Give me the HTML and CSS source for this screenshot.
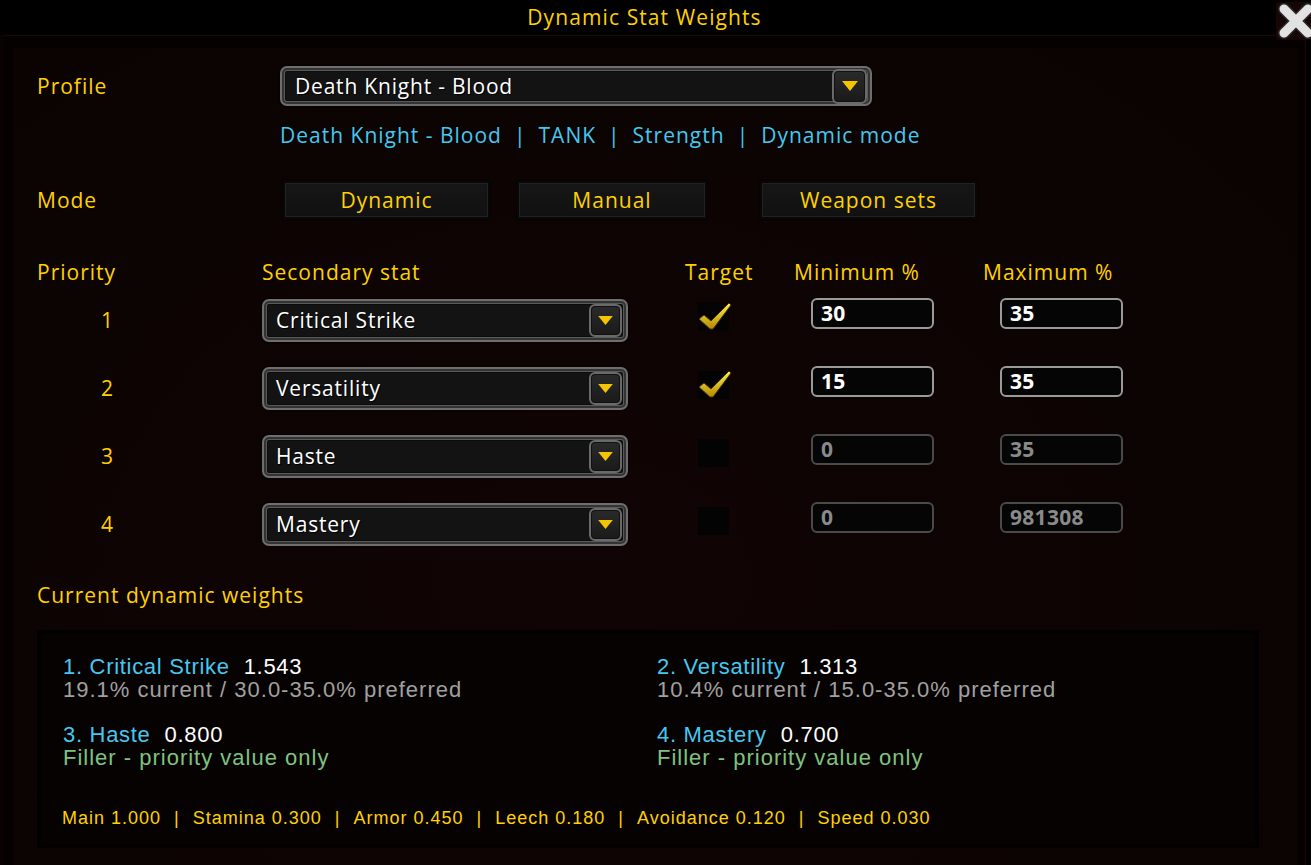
FILE: index.html
```html
<!DOCTYPE html>
<html lang="en">
<head>
<meta charset="utf-8">
<title>Dynamic Stat Weights</title>
<link rel="stylesheet" href="styles.css">
</head>
<body>
<div class="window">
  <header class="titlebar">
    <h1 class="title">Dynamic Stat Weights</h1>
    <button class="close" aria-label="Close">
      <svg viewBox="0 0 40 36" width="40" height="36">
        <path d="M8 6 L32 30 M32 6 L8 30" stroke="#2a2a2a" stroke-width="12" stroke-linecap="round"/>
        <path d="M8 6 L32 30 M32 6 L8 30" stroke="#e2e2e2" stroke-width="9" stroke-linecap="round"/>
      </svg>
    </button>
  </header>
  <div class="frame">
    <main class="panel">
      <section class="field-row profile-row">
        <span class="label">Profile</span>
        <div class="dropdown dropdown-lg">
          <span class="dd-text">Death Knight - Blood</span>
          <span class="dd-btn"><svg viewBox="0 0 18 12" width="18" height="12"><path d="M1 1 H17 L9 11 Z" fill="#f5c400"/></svg></span>
        </div>
      </section>
      <p class="info">Death Knight - Blood<span class="sep">|</span>TANK<span class="sep">|</span>Strength<span class="sep">|</span>Dynamic mode</p>

      <section class="field-row mode-row">
        <span class="label">Mode</span>
        <div class="mode-buttons">
          <button class="mode-btn btn-dynamic">Dynamic</button>
          <button class="mode-btn btn-manual">Manual</button>
          <button class="mode-btn btn-sets">Weapon sets</button>
        </div>
      </section>

      <div class="stat-table">
        <div class="th">Priority</div>
        <div class="th">Secondary stat</div>
        <div class="th th-target">Target</div>
        <div class="th">Minimum %</div>
        <div class="th">Maximum %</div>

        <div class="prio">1</div>
        <div class="dropdown dropdown-sm"><span class="dd-text">Critical Strike</span><span class="dd-btn"><svg viewBox="0 0 18 12" width="17" height="11"><path d="M1 1 H17 L9 11 Z" fill="#f5c400"/></svg></span></div>
        <div class="cell-check"><span class="checkbox"><svg class="check" viewBox="0 0 34 30" width="34" height="30"><defs><linearGradient id="g1" x1="0" y1="0" x2="0" y2="1"><stop offset="0" stop-color="#fff04a"/><stop offset="1" stop-color="#b48a00"/></linearGradient></defs><path d="M1 17 L6 13 L13 19 L31 1 L33 3 L15 27 L12 27 Z" fill="url(#g1)" stroke="#4a3500" stroke-width="1"/></svg></span></div>
        <div class="cell-input"><span class="num-input">30</span></div>
        <div class="cell-input"><span class="num-input">35</span></div>

        <div class="prio">2</div>
        <div class="dropdown dropdown-sm"><span class="dd-text">Versatility</span><span class="dd-btn"><svg viewBox="0 0 18 12" width="17" height="11"><path d="M1 1 H17 L9 11 Z" fill="#f5c400"/></svg></span></div>
        <div class="cell-check"><span class="checkbox"><svg class="check" viewBox="0 0 34 30" width="34" height="30"><path d="M1 17 L6 13 L13 19 L31 1 L33 3 L15 27 L12 27 Z" fill="url(#g1)" stroke="#4a3500" stroke-width="1"/></svg></span></div>
        <div class="cell-input"><span class="num-input">15</span></div>
        <div class="cell-input"><span class="num-input">35</span></div>

        <div class="prio">3</div>
        <div class="dropdown dropdown-sm"><span class="dd-text">Haste</span><span class="dd-btn"><svg viewBox="0 0 18 12" width="17" height="11"><path d="M1 1 H17 L9 11 Z" fill="#f5c400"/></svg></span></div>
        <div class="cell-check"><span class="checkbox"></span></div>
        <div class="cell-input"><span class="num-input disabled">0</span></div>
        <div class="cell-input"><span class="num-input disabled">35</span></div>

        <div class="prio">4</div>
        <div class="dropdown dropdown-sm"><span class="dd-text">Mastery</span><span class="dd-btn"><svg viewBox="0 0 18 12" width="17" height="11"><path d="M1 1 H17 L9 11 Z" fill="#f5c400"/></svg></span></div>
        <div class="cell-check"><span class="checkbox"></span></div>
        <div class="cell-input"><span class="num-input disabled">0</span></div>
        <div class="cell-input"><span class="num-input disabled">981308</span></div>
      </div>

      <h2 class="section-title">Current dynamic weights</h2>
      <div class="weights">
        <div class="weights-grid">
          <div class="w-item">
            <div class="w-head"><span class="w-name">1. Critical Strike</span><span class="w-val">1.543</span></div>
            <div class="w-sub">19.1% current / 30.0-35.0% preferred</div>
          </div>
          <div class="w-item">
            <div class="w-head"><span class="w-name">2. Versatility</span><span class="w-val">1.313</span></div>
            <div class="w-sub">10.4% current / 15.0-35.0% preferred</div>
          </div>
          <div class="w-item">
            <div class="w-head"><span class="w-name">3. Haste</span><span class="w-val">0.800</span></div>
            <div class="w-sub filler">Filler - priority value only</div>
          </div>
          <div class="w-item">
            <div class="w-head"><span class="w-name">4. Mastery</span><span class="w-val">0.700</span></div>
            <div class="w-sub filler">Filler - priority value only</div>
          </div>
        </div>
        <p class="extras">Main 1.000<span class="sep2">|</span>Stamina 0.300<span class="sep2">|</span>Armor 0.450<span class="sep2">|</span>Leech 0.180<span class="sep2">|</span>Avoidance 0.120<span class="sep2">|</span>Speed 0.030</p>
      </div>
    </main>
  </div>
</div>
</body>
</html>
```

FILE: styles.css
```css
* { box-sizing: border-box; }

html, body {
  margin: 0;
  padding: 0;
  background: #000;
  width: 1311px;
  height: 865px;
  overflow: hidden;
}

body {
  font-family: "Open Sans", "Liberation Sans", sans-serif;
  font-size: 21px;
  letter-spacing: 1px;
  color: #ffd100;
}

.window {
  position: relative;
  width: 1311px;
  height: 865px;
}

.titlebar {
  position: relative;
  height: 35px;
  background: #000;
  display: flex;
  align-items: center;
  justify-content: center;
}

.title {
  margin: 0;
  font-size: 21px;
  font-weight: 400;
  letter-spacing: 1.1px;
  color: #ffd100;
  line-height: 1;
  padding-right: 22px;
}

.close {
  position: absolute;
  right: -5px;
  top: 2px;
  width: 40px;
  height: 38px;
  padding: 0;
  border: 0;
  background: #160606;
  border-radius: 3px;
  display: flex;
  align-items: center;
  justify-content: center;
}

.frame {
  width: 1306px;
  height: 830px;
  background: #050101;
  border-top: 1px solid #1c0808;
  border-left: 4px solid #080202;
  border-right: 1px solid #1c0808;
  padding: 12px 7px 0 9px;
}

.panel {
  height: 100%;
  background: radial-gradient(ellipse at 45% 65%, #110404 0%, #0c0303 60%, #0b0202 100%);
  padding: 18px 0 0 24px;
}

.field-row {
  display: flex;
  align-items: center;
}

.label {
  width: 243px;
  color: #ffd100;
}

/* dropdowns */
.dropdown {
  display: flex;
  align-items: center;
  justify-content: space-between;
  background: #131313;
  border: 2px solid #6e6e6e;
  border-radius: 7px;
  box-shadow: inset 0 0 0 2px #333, inset 0 0 0 3px #5a5a5a, inset 0 0 0 4px #0c0c0c, 0 0 2px #000;
  color: #fff;
}

.dropdown-lg {
  width: 592px;
  height: 40px;
  padding: 0 3px 0 13px;
}

.dropdown-sm {
  width: 366px;
  height: 43px;
  padding: 0 4px 0 12px;
}

.dd-text {
  color: #fff;
  letter-spacing: 0.8px;
  text-shadow: 1px 1px 0 #000;
}

.dd-btn {
  width: 35px;
  height: 35px;
  border: 2px solid #6a6a6a;
  border-radius: 6px;
  background: linear-gradient(#2a2a2a, #1a1a1a);
  box-shadow: inset 0 0 0 1px #111;
  display: flex;
  align-items: center;
  justify-content: center;
}

.dropdown-sm .dd-btn {
  width: 33px;
  height: 33px;
}

.info {
  margin: 17px 0 0 243px;
  height: 24px;
  line-height: 24px;
  color: #45c8f0;
}

.sep {
  margin: 0 12px;
}

.mode-row {
  margin-top: 34px;
}

.mode-buttons {
  display: flex;
  margin-left: 3px;
}

.mode-btn {
  height: 38px;
  background: linear-gradient(#161616, #111);
  border: 2px solid #070707;
  box-shadow: inset 0 0 0 1px #222, 0 0 2px #000;
  color: #ffd100;
  font-family: inherit;
  font-size: 21px;
  letter-spacing: 1px;
  padding: 0;
}

.btn-dynamic { width: 207px; }
.btn-manual { width: 190px; margin-left: 27px; }
.btn-sets { width: 217px; margin-left: 53px; }

/* table */
.stat-table {
  margin-top: 39px;
  display: grid;
  grid-template-columns: 225px 366px 166px 189px 190px;
  grid-template-rows: 28px repeat(4, 68px);
  align-items: center;
}

.th {
  line-height: 24px;
  color: #ffd100;
}

.th-target {
  padding-left: 57px;
}

.prio {
  padding-left: 64px;
  color: #ffd100;
}

.cell-check {
  padding-left: 70px;
  margin-bottom: 6px;
}

.checkbox {
  position: relative;
  display: block;
  width: 31px;
  height: 28px;
  background: #030303;
}

.check {
  position: absolute;
  left: 0;
  top: -1px;
}

.cell-input {
  padding-left: 17px;
  margin-bottom: 14px;
}

.num-input {
  display: flex;
  align-items: center;
  width: 123px;
  height: 31px;
  border: 2px solid #9a9a9a;
  border-radius: 6px;
  background: #050505;
  padding-left: 8px;
  font-size: 21px;
  font-weight: 700;
  letter-spacing: 0.3px;
  color: #fff;
}

.num-input.disabled {
  border-color: #4a4a4a;
  color: #8a8a8a;
}

.section-title {
  margin: 25px 0 0 0;
  font-size: 21px;
  font-weight: 400;
  line-height: 24px;
  color: #ffd100;
}

.weights {
  margin-top: 23px;
  width: 1222px;
  height: 218px;
  background: #070202;
  border: 4px solid #020000;
  padding: 21px 0 0 22px;
  font-family: "Liberation Sans", sans-serif;
  letter-spacing: 0.7px;
}

.weights-grid {
  display: grid;
  grid-template-columns: 594px 594px;
  row-gap: 22px;
}

.w-item {
  height: 46px;
}

.w-head {
  font-size: 22px;
  line-height: 23px;
}

.w-name {
  color: #45c8f0;
  margin-right: 14px;
}

.w-val {
  color: #fff;
}

.w-sub {
  font-size: 22px;
  line-height: 23px;
  letter-spacing: 1px;
  color: #a0a0a0;
}

.w-sub.filler {
  color: #7fc27f;
}

.extras {
  margin: 39px 0 0 -1px;
  font-size: 18px;
  line-height: 20px;
  letter-spacing: 1px;
  color: #ffd100;
}

.sep2 {
  margin: 0 13px;
}
```
